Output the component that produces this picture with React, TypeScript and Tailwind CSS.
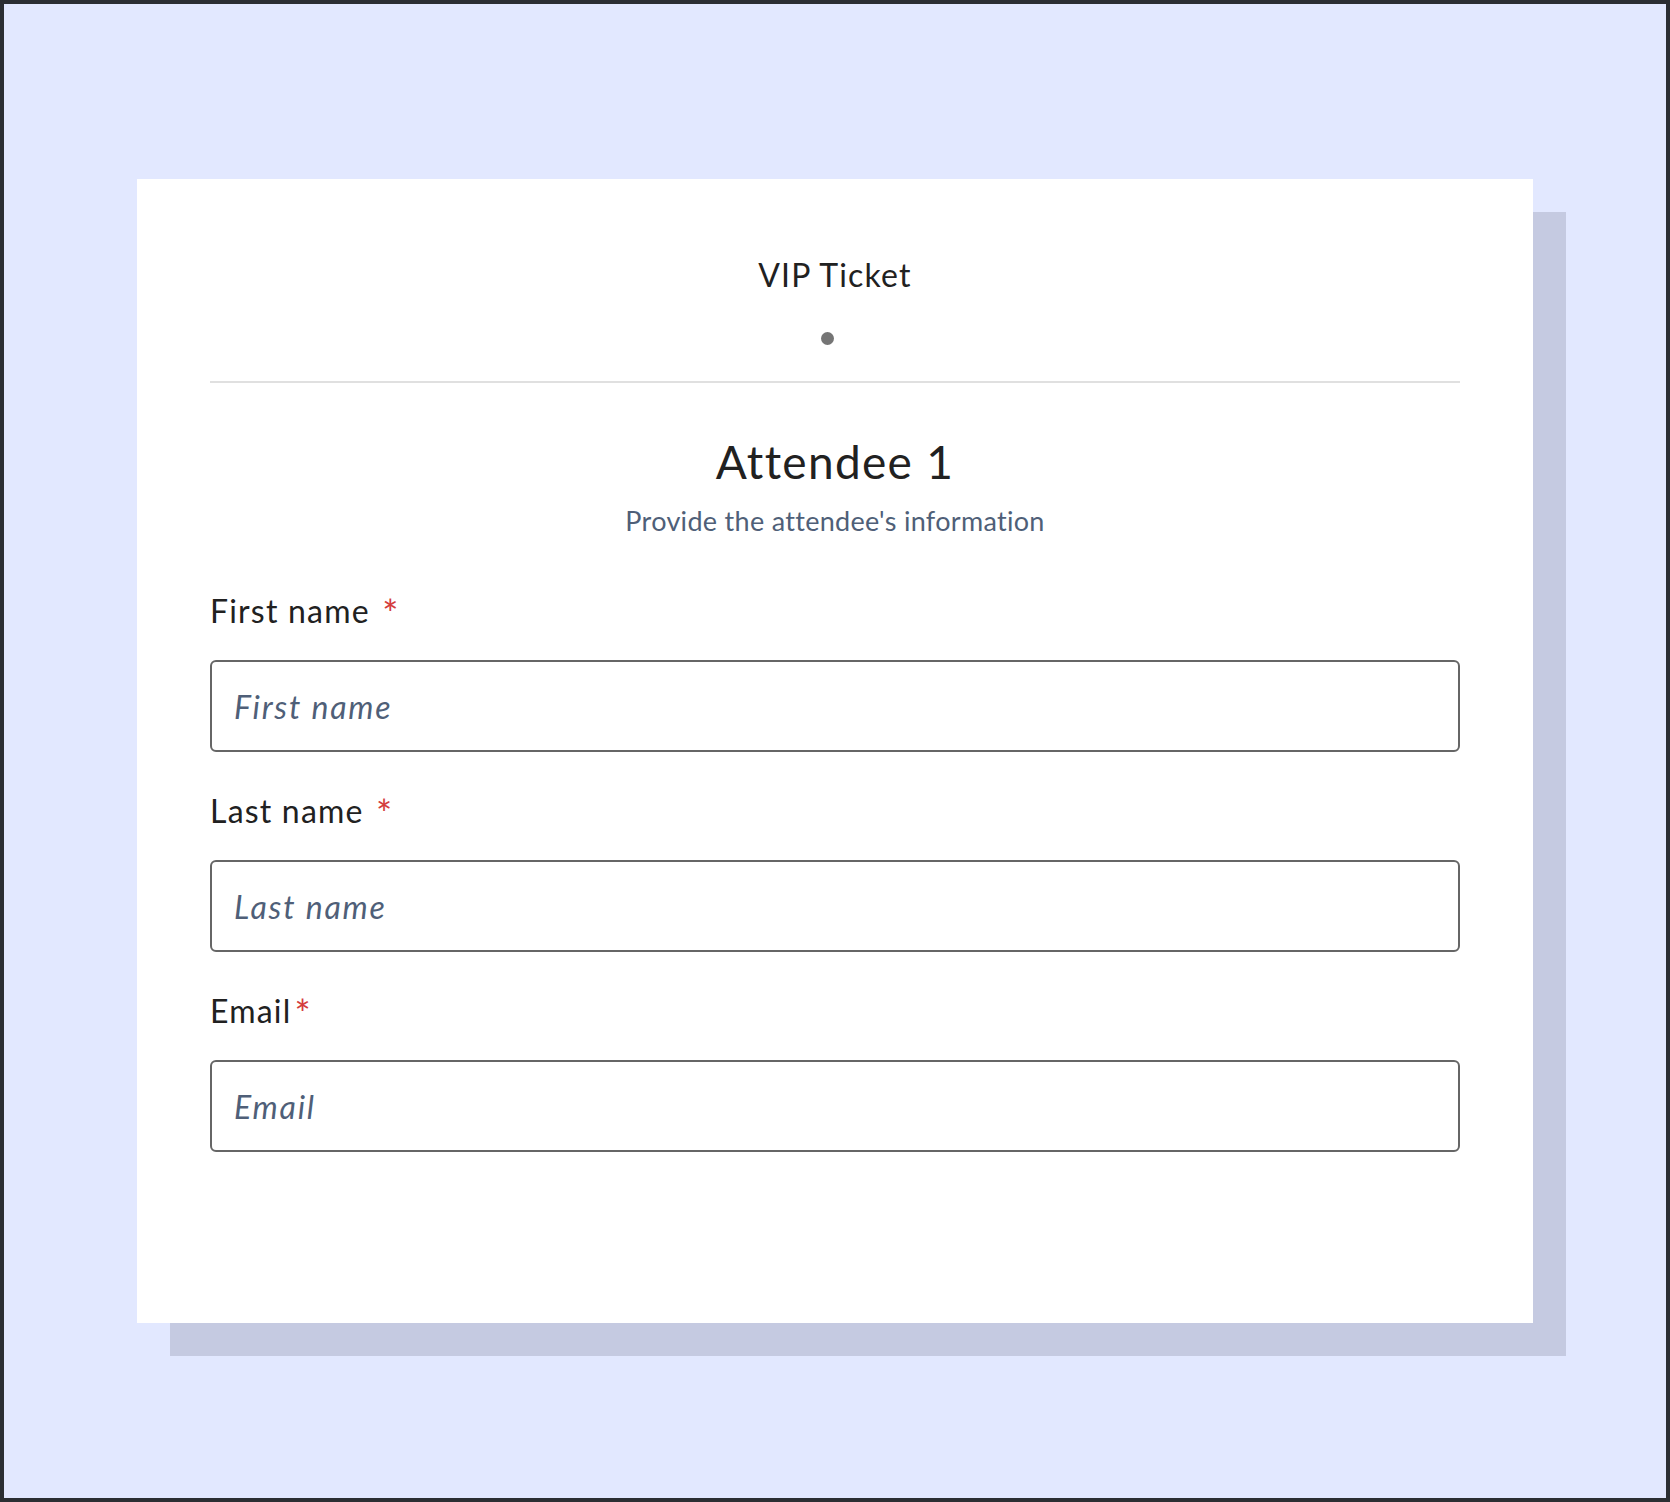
import React from "react"

const fields = [
  { label: "First name", spaced: true, type: "text" },
  { label: "Last name", spaced: true, type: "text" },
  { label: "Email", spaced: false, type: "email" },
]

export default function App() {
  return (
    <div
      className="h-[1502px] w-full border-4 border-[#2b2e33] bg-[#e2e8ff] pt-[175px]"
      style={{ fontFamily: "Lato, 'Noto Sans', sans-serif" }}
    >
      {/* Card */}
      <div className="mx-auto w-[1396px] bg-white px-[73px] pt-[76px] pb-[171px] shadow-[33px_33px_0_0_#c5cae1]">
        <div className="flex flex-col items-center">
          <h2 className="text-[32px] leading-[40px] tracking-[1.2px] text-[#212121]">VIP Ticket</h2>
          <span className="mt-[37px] h-[13px] w-[13px] -translate-x-2 rounded-full bg-[#757575]" />
        </div>

        <div className="mt-[36px] h-[2px] w-full bg-[#e0e0e0]" />

        <div className="flex flex-col items-center">
          <h1 className="mt-[51px] text-[46px] leading-[56px] tracking-[1.3px] text-[#212121]">Attendee 1</h1>
          <p className="mt-[13px] text-[27px] leading-[36px] tracking-[0.3px] text-[#4f5f78]">
            Provide the attendee's information
          </p>
        </div>

        {/* Fields */}
        <form className="mt-[52px] flex flex-col gap-[39px]">
          {fields.map((field) => (
            <label key={field.label} className="flex flex-col gap-[29px]">
              <span className="h-[40px] text-[32px] leading-[40px] tracking-[1.2px] text-[#212121]">
                {field.label}
                {field.spaced ? " " : ""}
                <span className="relative top-[5px] ml-[3px] text-[38px] leading-[0] text-[#d43c3c]">*</span>
              </span>
              <input
                type={field.type}
                placeholder={field.label}
                className="h-[92px] w-full rounded-md border-2 border-[#666666] px-[22px] text-[32px] leading-[40px] tracking-[1.8px] text-[#212121] outline-none placeholder:italic placeholder:text-[#4f5f78]"
              />
            </label>
          ))}
        </form>
      </div>
    </div>
  )
}
